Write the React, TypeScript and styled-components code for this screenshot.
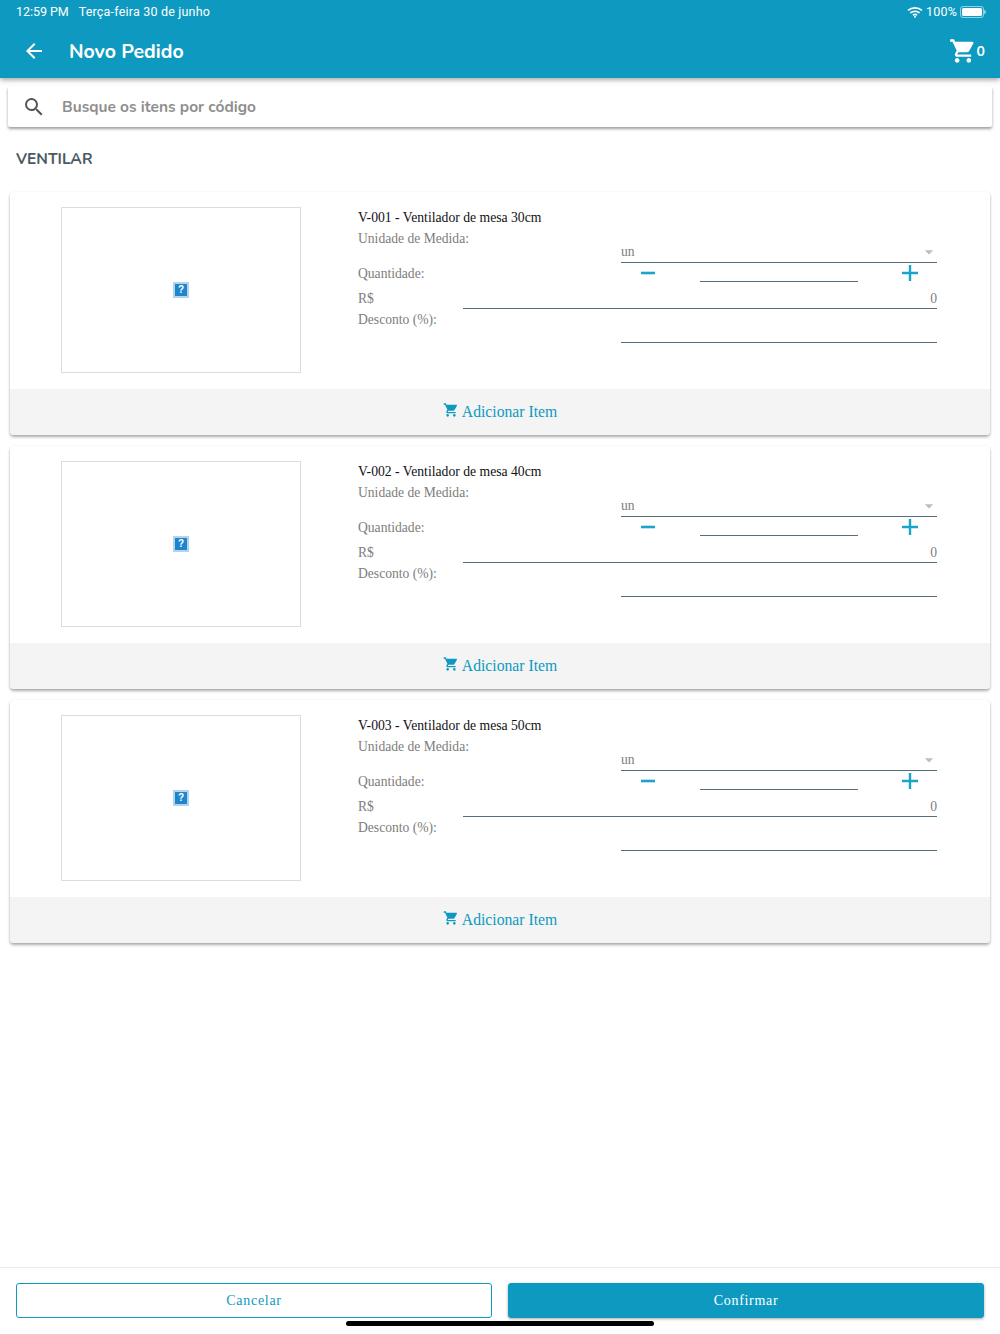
import React from "react";
import styled, { createGlobalStyle } from "styled-components";
import { MdArrowBack, MdSearch, MdShoppingCart, MdArrowDropDown } from "react-icons/md";

const Global = createGlobalStyle`
  html, body { margin: 0; padding: 0; background: #fff; }
  * { box-sizing: border-box; }
`;

const Page = styled.div`
  position: relative;
  width: 1000px;
  height: 1334px;
  display: flex;
  flex-direction: column;
  overflow: hidden;
  background: #fff;
  font-family: "Liberation Serif", serif;
`;
const Header = styled.header`
  height: 78px;
  background: #0e9ac0;
  color: #fff;
  box-shadow: 0 2px 5px rgba(0, 0, 0, 0.35);
  position: relative;
  z-index: 2;
  flex: none;
`;
const StatusBar = styled.div`
  height: 23px;
  padding: 0 16px;
  display: flex;
  align-items: center;
  gap: 10px;
  font: 400 12.5px/23px Roboto, sans-serif;
  letter-spacing: 0.2px;
`;
const ClockText = styled.span`
  letter-spacing: -0.05px;
`;
const StatusRight = styled.div`
  margin-left: auto;
  display: flex;
  align-items: center;
  gap: 3px;
`;
const Battery = styled.span`
  position: relative;
  width: 24px;
  height: 12px;
  border: 1px solid rgba(255, 255, 255, 0.55);
  border-radius: 3px;
  padding: 1px;
  display: block;
  &::before {
    content: "";
    display: block;
    height: 100%;
    background: #fff;
    border-radius: 1.5px;
  }
  &::after {
    content: "";
    position: absolute;
    right: -3px;
    top: 3px;
    width: 2px;
    height: 4px;
    border-radius: 0 2px 2px 0;
    background: rgba(255, 255, 255, 0.55);
  }
`;
const AppBar = styled.div`
  height: 55px;
  padding: 1px 15px 0 22px;
  display: flex;
  align-items: center;
`;
const BackIcon = styled(MdArrowBack)`
  font-size: 24px;
  flex: none;
`;
const Title = styled.h1`
  margin: 1px 0 0 23px;
  font: 700 19.5px/28px "Nunito", Lato, sans-serif;
`;
const CartBox = styled.div`
  margin-left: auto;
  display: flex;
  align-items: center;
  font: 700 14px/28px "Nunito", Lato, sans-serif;
`;
const CartIcon = styled(MdShoppingCart)`
  font-size: 28px;
`;
const CartCount = styled.span`
  padding-top: 2px;
`;
const Main = styled.main`
  flex: 1;
  padding: 8px 8px 0;
`;
const SearchCard = styled.div`
  height: 41px;
  background: #fff;
  box-shadow: 0 2px 3px rgba(0, 0, 0, 0.38);
  border-radius: 2px;
  display: flex;
  align-items: center;
  padding-left: 14px;
  gap: 16px;
`;
const SearchIcon = styled(MdSearch)`
  font-size: 24px;
  color: #555;
`;
const SearchText = styled.span`
  font: 700 15.5px/24px "Nunito", Lato, sans-serif;
  color: #8f8f8f;
`;
const Section = styled.h2`
  margin: 22px 0 23px 8px;
  font: 700 15.5px/20px "Nunito", Lato, sans-serif;
  color: #4a5a63;
`;
const CardList = styled.div`
  display: flex;
  flex-direction: column;
  gap: 11px;
  padding: 0 2px;
`;
const Card = styled.article`
  height: 243px;
  background: #fff;
  border-radius: 4px;
  box-shadow: 0 2px 3px rgba(0, 0, 0, 0.33), 0 0 2px rgba(0, 0, 0, 0.06);
  display: flex;
  flex-direction: column;
  overflow: hidden;
`;
const CardBody = styled.div`
  height: 197px;
  padding: 15px 53px 0 51px;
  display: flex;
  gap: 57px;
`;
const Thumb = styled.div`
  width: 240px;
  height: 166px;
  flex: none;
  border: 1px solid #dcdcdc;
  display: flex;
  align-items: center;
  justify-content: center;
`;
const BrokenImage = styled.span`
  width: 16px;
  height: 16px;
  background: #1f86c9;
  border: 2px solid #b3d4ee;
  color: #fff;
  font: 700 10px/12px "Liberation Sans", sans-serif;
  text-align: center;
`;
const Form = styled.div`
  flex: 1;
  min-width: 0;
  display: flex;
  flex-direction: column;
  font-size: 13.6px;
  color: #7d7d7d;
`;
const ItemName = styled.div`
  height: 21px;
  line-height: 22px;
  font-size: 13.68px;
  color: #111;
`;
const Label = styled.div`
  height: 17px;
  line-height: 22px;
`;
const FieldWrap = styled.div`
  margin-left: 263px;
`;
const SelectField = styled(FieldWrap)`
  height: 18px;
  border-bottom: 1px solid #546e7a;
  display: flex;
  justify-content: space-between;
  line-height: 14px;
`;
const SelectArrow = styled(MdArrowDropDown)`
  font-size: 20px;
  color: #bdbdbd;
  margin: -3px -2px 0 0;
`;
const QtyRow = styled.div`
  height: 25px;
  display: grid;
  grid-template-columns: 263px 79px 158px 79px;
  line-height: 22px;
`;
const StepSvg = styled.svg<{ $end?: boolean }>`
  width: 16px;
  height: 16px;
  margin-top: 2px;
  color: #1ba3c9;
  margin-left: ${(p) => (p.$end ? "auto" : "20px")};
  margin-right: ${(p) => (p.$end ? "19px" : "0")};
`;
const QtyInput = styled.div`
  height: 19px;
  border-bottom: 1px solid #546e7a;
`;
const PriceRow = styled.div`
  height: 21px;
  display: flex;
  line-height: 22px;
`;
const PriceLabel = styled.span`
  width: 105px;
  flex: none;
`;
const PriceInput = styled.div`
  flex: 1;
  border-bottom: 1px solid #546e7a;
  text-align: right;
`;
const DiscountLabel = styled.div`
  height: 20px;
  line-height: 22px;
`;
const DiscountInput = styled(FieldWrap)`
  height: 14px;
  border-bottom: 1px solid #546e7a;
`;
const AddBar = styled.button`
  height: 46px;
  border: 0;
  background: #f4f4f4;
  color: #0e9ac0;
  display: flex;
  align-items: center;
  justify-content: center;
  gap: 3px;
  font: 400 15.7px/20px "Liberation Serif", serif;
  padding: 0;
`;
const AddIcon = styled(MdShoppingCart)`
  font-size: 16px;
  margin-top: -4px;
`;
const Footer = styled.footer`
  height: 67px;
  flex: none;
  border-top: 1px solid #eaeaea;
  padding: 15px 16px 0;
  display: grid;
  grid-template-columns: 476px 476px;
  justify-content: space-between;
  align-items: start;
`;
const ActionButton = styled.button<{ $primary?: boolean }>`
  height: 35px;
  border-radius: 3px;
  border: 1px solid #0e9ac0;
  background: ${(p) => (p.$primary ? "#0e9ac0" : "#fff")};
  color: ${(p) => (p.$primary ? "#fff" : "#0e9ac0")};
  box-shadow: ${(p) => (p.$primary ? "0 1px 3px rgba(0,0,0,.35)" : "none")};
  font: 400 14px/20px "Liberation Serif", serif;
  letter-spacing: 0.7px;
`;
const HomeIndicator = styled.div`
  position: absolute;
  left: 346px;
  bottom: 8px;
  width: 308px;
  height: 5px;
  border-radius: 3px;
  background: #000;
`;

const items = ["V-001 - Ventilador de mesa 30cm", "V-002 - Ventilador de mesa 40cm", "V-003 - Ventilador de mesa 50cm"];

const Wifi = () => (
  <svg width="16" height="12" viewBox="0 0 16 12" fill="none" stroke="#fff" strokeWidth="1.7">
    <path d="M1 4.4C5 .9 11 .9 15 4.4" />
    <path d="M3.4 6.9c2.7-2.2 6.5-2.2 9.2 0" />
    <path d="M5.9 9.1c1.3-.9 2.9-.9 4.2 0" />
    <circle cx="8" cy="10.8" r="1" fill="#fff" stroke="none" />
  </svg>
);

export default function App() {
  return (
    <Page>
      <Global />
      <Header>
        <StatusBar>
          <ClockText>12:59 PM</ClockText>
          <span>Terça-feira 30 de junho</span>
          <StatusRight>
            <Wifi />
            <span>100%</span>
            <Battery />
          </StatusRight>
        </StatusBar>
        <AppBar>
          <BackIcon />
          <Title>Novo Pedido</Title>
          <CartBox>
            <CartIcon />
            <CartCount>0</CartCount>
          </CartBox>
        </AppBar>
      </Header>
      <Main>
        <SearchCard>
          <SearchIcon />
          <SearchText>Busque os itens por código</SearchText>
        </SearchCard>
        <Section>VENTILAR</Section>
        <CardList>
          {items.map((name) => (
            <Card key={name}>
              <CardBody>
                <Thumb>
                  <BrokenImage>?</BrokenImage>
                </Thumb>
                <Form>
                  <ItemName>{name}</ItemName>
                  <Label>Unidade de Medida:</Label>
                  <SelectField>
                    <span>un</span>
                    <SelectArrow />
                  </SelectField>
                  <QtyRow>
                    <span>Quantidade:</span>
                    <StepSvg viewBox="0 0 16 16">
                      <rect x="0" y="6.7" width="14" height="2.6" fill="currentColor" />
                    </StepSvg>
                    <QtyInput />
                    <StepSvg $end viewBox="0 0 16 16">
                      <path d="M0 6.8h6.8V0h2.4v6.8H16v2.4H9.2V16H6.8V9.2H0z" fill="currentColor" />
                    </StepSvg>
                  </QtyRow>
                  <PriceRow>
                    <PriceLabel>R$</PriceLabel>
                    <PriceInput>0</PriceInput>
                  </PriceRow>
                  <DiscountLabel>Desconto (%):</DiscountLabel>
                  <DiscountInput />
                </Form>
              </CardBody>
              <AddBar>
                <AddIcon />
                Adicionar Item
              </AddBar>
            </Card>
          ))}
        </CardList>
      </Main>
      <Footer>
        <ActionButton>Cancelar</ActionButton>
        <ActionButton $primary>Confirmar</ActionButton>
      </Footer>
      <HomeIndicator />
    </Page>
  );
}
